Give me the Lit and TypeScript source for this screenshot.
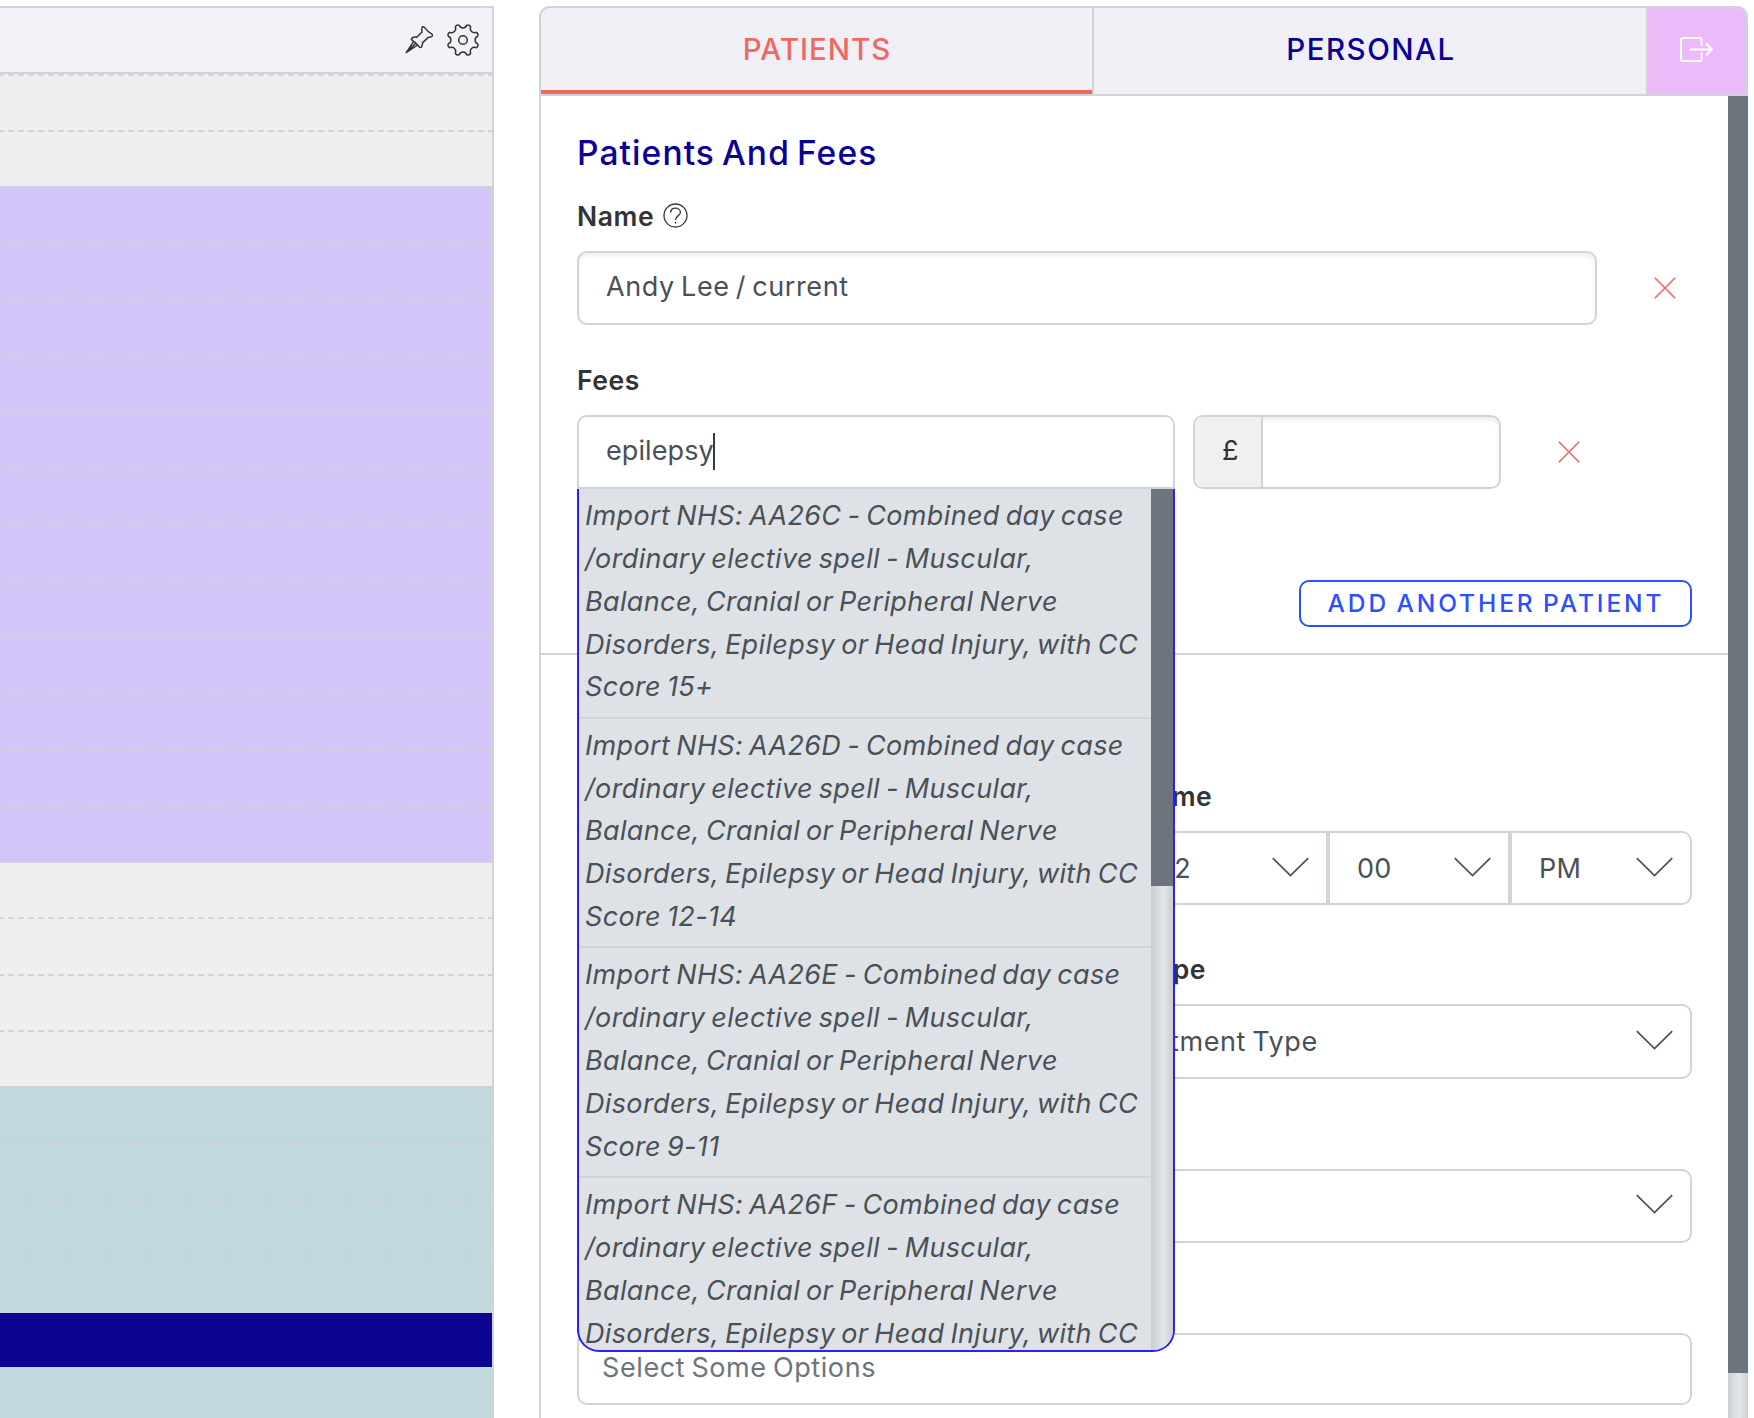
import { LitElement, html, css, nothing } from 'lit';
import { customElement, state } from 'lit/decorators.js';
import { classMap } from 'lit/directives/class-map.js';

type Tone = 'idle' | 'lilac' | 'teal' | 'navy';
interface Slot { h: number; tone: Tone; line: 'dashed' | 'solid' | 'none'; }

const slot = (h: number, tone: Tone, line: Slot['line'] = 'dashed'): Slot => ({ h, tone, line });

/* Quarter-hour slots; each one carries its separator on the top edge. */
const SLOTS: Slot[] = [
  slot(56, 'idle'), slot(56, 'idle'),
  slot(56, 'lilac', 'solid'), slot(57, 'lilac'), slot(56, 'lilac'), slot(56, 'lilac'),
  slot(56, 'lilac', 'solid'), slot(57, 'lilac'), slot(56, 'lilac'), slot(56, 'lilac'),
  slot(56, 'lilac', 'solid'), slot(57, 'lilac'), slot(56, 'lilac'), slot(56, 'lilac'),
  slot(56, 'idle', 'solid'), slot(57, 'idle'), slot(56, 'idle'), slot(56, 'idle'),
  slot(56, 'teal', 'solid'), slot(57, 'teal'), slot(56, 'teal'), slot(56, 'teal'),
  slot(56, 'navy', 'solid'), slot(60, 'teal', 'none'),
];

const FEES: { code: string; score?: string }[] = [
  { code: 'AA26C', score: '15+' },
  { code: 'AA26D', score: '12-14' },
  { code: 'AA26E', score: '9-11' },
  { code: 'AA26F' },
];

const gearPath = (cx: number, cy: number, r: number): string => {
  const at = (deg: number) => {
    const a = (deg * Math.PI) / 180;
    return `${(cx + r * Math.sin(a)).toFixed(2)} ${(cy - r * Math.cos(a)).toFixed(2)}`;
  };
  let d = '';
  for (let k = 0; k < 8; k++) {
    const mid = 22.5 + 45 * k;
    d += k === 0 ? `M${at(mid - 8)}` : '';
    d += `A2.6 2.6 0 0 1 ${at(mid + 8)}A4.1 4.1 0 0 0 ${at(mid + 37)}`;
  }
  return d + 'Z';
};

const chevron = html`<svg class="chevron" width="37" height="20" viewBox="0 0 37 20">
  <path d="M0.8 1.2L18.5 18.6L36.2 1.2" fill="none" stroke="#495057" stroke-width="1.7"/></svg>`;

const cross = html`<svg class="cross" width="22" height="22" viewBox="0 0 22 22">
  <path d="M0.8 0.8L21.2 21.2M21.2 0.8L0.8 21.2" fill="none" stroke="#ec6a62" stroke-width="1.6"/></svg>`;

@customElement('calendar-column')
export class CalendarColumn extends LitElement {
  static styles = css`
    :host { display: block; box-sizing: border-box; width: 494px; height: 1412px; margin-top: 6px;
      border-top: 2px solid #ced4da; border-right: 2px solid #ced4da; overflow: hidden; }
    .head { height: 64px; display: flex; align-items: center; justify-content: flex-end; gap: 14px;
      padding-right: 13.5px; background: #f3f2f8; border-bottom: 2px solid #ced4da; }
    .head svg { display: block; fill: none; stroke: #333; stroke-width: 1.5; stroke-linejoin: round; }
    .slot { box-sizing: border-box; }
    .slot::before { content: ''; display: block; height: 2px; }
    .solid::before { background: #ced2da; }
    .dashed::before { background: repeating-linear-gradient(90deg, #ced4da 0 4px, transparent 4px 8px, #ced4da 8px 10px); }
    .idle { background: #eee; }
    .lilac { background: #d3c5f7; }
    .teal { background: #c0d9dc; }
    .teal.dashed::before { background: repeating-linear-gradient(90deg, #d0d0dc 0 4px, transparent 4px 8px, #d0d0dc 8px 10px); }
    .navy { background: #0d0592; }
  `;
  render() {
    return html`
      <div class="head">
        <svg width="28" height="28" viewBox="405 26 28 28">
          <path d="M422.6 26.8Q423.6 26.4 424.6 27.6Q427.6 31.6 431.6 33.8Q433 35 432.3 36Q431 37.4 428 37.6L422.6 42.6Q422.6 45.6 421.4 47.2Q420.4 47.8 419.4 47Q416 42.4 412 40.2Q411 39.2 411.8 38.4Q413.6 36.8 416.8 37.2L422 32Q421.4 28 422.6 26.8Z"/>
          <path d="M413.6 41.6L406.2 52.6L417.6 45M415.8 43.2L406.2 52.6"/>
        </svg>
        <svg width="32" height="32" viewBox="0 0 32 32">
          <path d="${gearPath(16, 16, 15.1)}"/><circle cx="16" cy="16" r="4.3"/>
        </svg>
      </div>
      ${SLOTS.map((s) => html`<div class="slot ${s.tone} ${s.line}" style="height:${s.h}px"></div>`)}
    `;
  }
}

@customElement('app-root')
export class AppRoot extends LitElement {
  @state() private tab: 'patients' | 'personal' = 'patients';
  @state() private query = 'epilepsy';

  static styles = css`
    * { box-sizing: border-box; }
    :host { display: flex; width: 1754px; height: 1418px; overflow: hidden; background: #fff;
      font: 400 27px/34px Inter, "Liberation Sans", sans-serif; letter-spacing: 0.6px; word-spacing: -2px; color: #495057; }
    svg { display: block; flex: none; }
    .panel { display: flex; flex-direction: column; width: 1209px; height: 1412px; margin: 6px 0 0 45px; }
    .tabs { display: flex; flex: none; height: 90px; border: 2px solid #ced4da; border-radius: 11px 11px 0 0;
      overflow: hidden; background: #f0eff5; }
    .tab { width: 553px; border-right: 2px solid #ced4da; display: flex; align-items: center; justify-content: center;
      position: relative; padding-bottom: 5px; color: #0a0096; font-weight: 500; font-size: 29.5px; letter-spacing: 1.5px; }
    .tab:nth-child(2) { width: 554px; padding-left: 2px; }
    .tab:first-child { letter-spacing: 1px; padding-left: 1px; }
    .tab.on { color: #ec6a62; }
    .tab.on::after { content: ''; position: absolute; left: 0; right: 0; bottom: 0; height: 4px; background: #ec6a5f; }
    .exit { flex: 1; background: #ebbaf9; display: flex; align-items: center; padding: 0 0 3px 31px; }
    .body { flex: 1; display: flex; min-height: 0; }
    .form { width: 1189px; border-left: 2px solid #ced4da; display: flex; flex-direction: column; padding-top: 35px; }
    .form > * { margin-left: 36px; margin-right: 36px; flex: none; }
    h2 { margin-top: 0; margin-bottom: 24px; font-size: 33.5px; line-height: 44px; font-weight: 450; letter-spacing: 1.1px; word-spacing: -3px; color: #0a0096; }
    .label { display: flex; align-items: center; gap: 9px; height: 34px; font-size: 26.5px; font-weight: 600; color: #333; margin-bottom: 18px; letter-spacing: 0.6px; }
    .label svg { margin-top: -1px; }
    .row { display: flex; align-items: center; }
    .input, .select, .money { border: 2px solid #ced4da; border-radius: 10px; background: #fff; display: flex; align-items: center; }
    .input { height: 74px; padding: 0 27px 3px; box-shadow: inset 0 3px 4px rgba(0,0,0,.07); white-space: pre; }
    .name { width: 1020px; }
    .fees { align-items: flex-start; height: 74px; }
    .fees-label { margin-top: 38px; }
    .combo { position: relative; width: 598px; letter-spacing: 0.1px; }
    .combo .input { box-shadow: none; border-radius: 10px 10px 0 0; }
    .caret { width: 2px; height: 37px; background: #333b44; margin: 2px 0 0 -1px; }
    .money { width: 308px; height: 74px; margin-left: 18px; overflow: hidden; box-shadow: inset 0 3px 4px rgba(0,0,0,.07); }
    .pound { width: 68px; height: 70px; background: #f0f0f0; border-right: 2px solid #ced4da; display: flex;
      align-items: center; justify-content: center; color: #333; padding: 0 0 3px 5px; }
    .name + .cross { margin-left: 57px; }
    .money + .cross { margin: 26px 0 0 57px; }
    .menu { position: absolute; z-index: 5; left: 0; top: 74px; width: 598px; height: 863px; display: flex;
      border: 2px solid #2c1fff; border-top: 0; border-radius: 0 0 22px 22px; background: #dee2e6; overflow: hidden; }
    .options { width: 572px; height: 861px; overflow: hidden; }
    .option { height: 229.67px; padding: 6px 0 0 6px; border-bottom: 2px solid #ced4da; font-style: italic;
      line-height: 42.85px; letter-spacing: 0.36px; white-space: nowrap; }
    .option div { height: 42.85px; }
    .track { background: linear-gradient(90deg, #c8cdd0, #dcdfe2 40%, #e2e6e8 60%, #c9cdd1); }
    .menu .track { width: 22px; }
    .menu .thumb { height: 397px; background: #6c757d; }
    .page-track { width: 20px; background: linear-gradient(90deg, #ccd0d4, #dfe2e5 40%, #e2e6e8 60%, #ccd0d4); }
    .page-track .thumb { height: 1277px; background: #6c757d; }
    .add { align-self: flex-end; width: 393px; height: 47px; margin-top: 91px; border: 2px solid #2c4fff; border-radius: 10px;
      display: flex; align-items: center; justify-content: center; color: #2c4fff; font-size: 24.5px; font-weight: 500;
      letter-spacing: 2.9px; padding: 0 0 2px 1px; white-space: nowrap; }
    hr { width: 1187px; margin: 26px 0 124px !important; border: 0; height: 2px; background: #ced4da; }
    .half { margin-left: 605px !important; }
    .times { display: flex; align-self: flex-end; width: 546px; }
    .times .select { width: 182px; padding-top: 1px; letter-spacing: 0.2px; }
    .times .select:first-child { padding-left: 15px; }
    .select { height: 74px; justify-content: space-between; padding: 0 17.5px 0 27px; }
    .select .chevron { margin-top: -4px; }
    .times .select:not(:first-child) { border-top-left-radius: 0; border-bottom-left-radius: 0; }
    .times .select:not(:last-child) { border-top-right-radius: 0; border-bottom-right-radius: 0; }
    .type { margin-top: 47px; margin-left: 599px !important; }
    .typebox { height: 75px; margin-left: 506px !important; }
    .wide { margin-top: 90px; }
    .multi { height: 72px; margin-top: 90px; padding: 0 23px 3px; color: #6c757d; }
  `;

  render() {
    return html`
      <calendar-column></calendar-column>
      <section class="panel">
        <nav class="tabs">
          <div class=${classMap({ tab: true, on: this.tab === 'patients' })} @click=${() => (this.tab = 'patients')}>PATIENTS</div>
          <div class=${classMap({ tab: true, on: this.tab === 'personal' })} @click=${() => (this.tab = 'personal')}>PERSONAL</div>
          <div class="exit">
            <svg width="36" height="28" viewBox="0 0 36 28" fill="none" stroke="#fff" stroke-width="2" stroke-linecap="round" stroke-linejoin="round">
              <path d="M22.6 9.5V3.6A1.5 1.5 0 0 0 21.1 2.1H3.5A1.5 1.5 0 0 0 2 3.6V23.4A1.5 1.5 0 0 0 3.5 24.9H21.1A1.5 1.5 0 0 0 22.6 23.4V17.2M11.6 13.4H32.8M27.6 8L33 13.4L27.6 18.8"/>
            </svg>
          </div>
        </nav>
        <div class="body">
          <main class="form">
            <h2>Patients And Fees</h2>
            <div class="label">Name
              <svg width="25" height="25" viewBox="0 0 25 25" fill="none" stroke="#333" stroke-width="1.3">
                <circle cx="12.5" cy="12.5" r="11.5"/>
                <path d="M7.6 9.8C7.6 6.8 9.7 5.2 12.5 5.2S17.4 7 17.4 9.4C17.4 12.6 12.5 12.8 12.5 17"/>
                <path d="M12.5 18.8V20.6"/>
              </svg>
            </div>
            <div class="row"><div class="input name">Andy Lee / current</div>${cross}</div>
            <div class="label fees-label">Fees</div>
            <div class="row fees">
              <div class="combo">
                <div class="input">${this.query}<span class="caret"></span></div>
                <div class="menu">
                  <div class="options">
                    ${FEES.map((f) => html`<div class="option">
                      <div>Import NHS: ${f.code} - Combined day case</div>
                      <div>/ordinary elective spell - Muscular,</div>
                      <div>Balance, Cranial or Peripheral Nerve</div>
                      <div>Disorders, Epilepsy or Head Injury, with CC</div>
                      ${f.score ? html`<div>Score ${f.score}</div>` : nothing}
                    </div>`)}
                  </div>
                  <div class="track"><div class="thumb"></div></div>
                </div>
              </div>
              <div class="money"><span class="pound">£</span></div>
              ${cross}
            </div>
            <div class="add">ADD ANOTHER PATIENT</div>
            <hr />
            <div class="label half">Time</div>
            <div class="times">
              ${['12', '00', 'PM'].map((v) => html`<div class="select">${v}${chevron}</div>`)}
            </div>
            <div class="label half type">Type</div>
            <div class="select typebox">Appointment Type${chevron}</div>
            <div class="select wide"><span></span>${chevron}</div>
            <div class="select multi">Select Some Options</div>
          </main>
          <div class="page-track"><div class="thumb"></div></div>
        </div>
      </section>
    `;
  }
}
